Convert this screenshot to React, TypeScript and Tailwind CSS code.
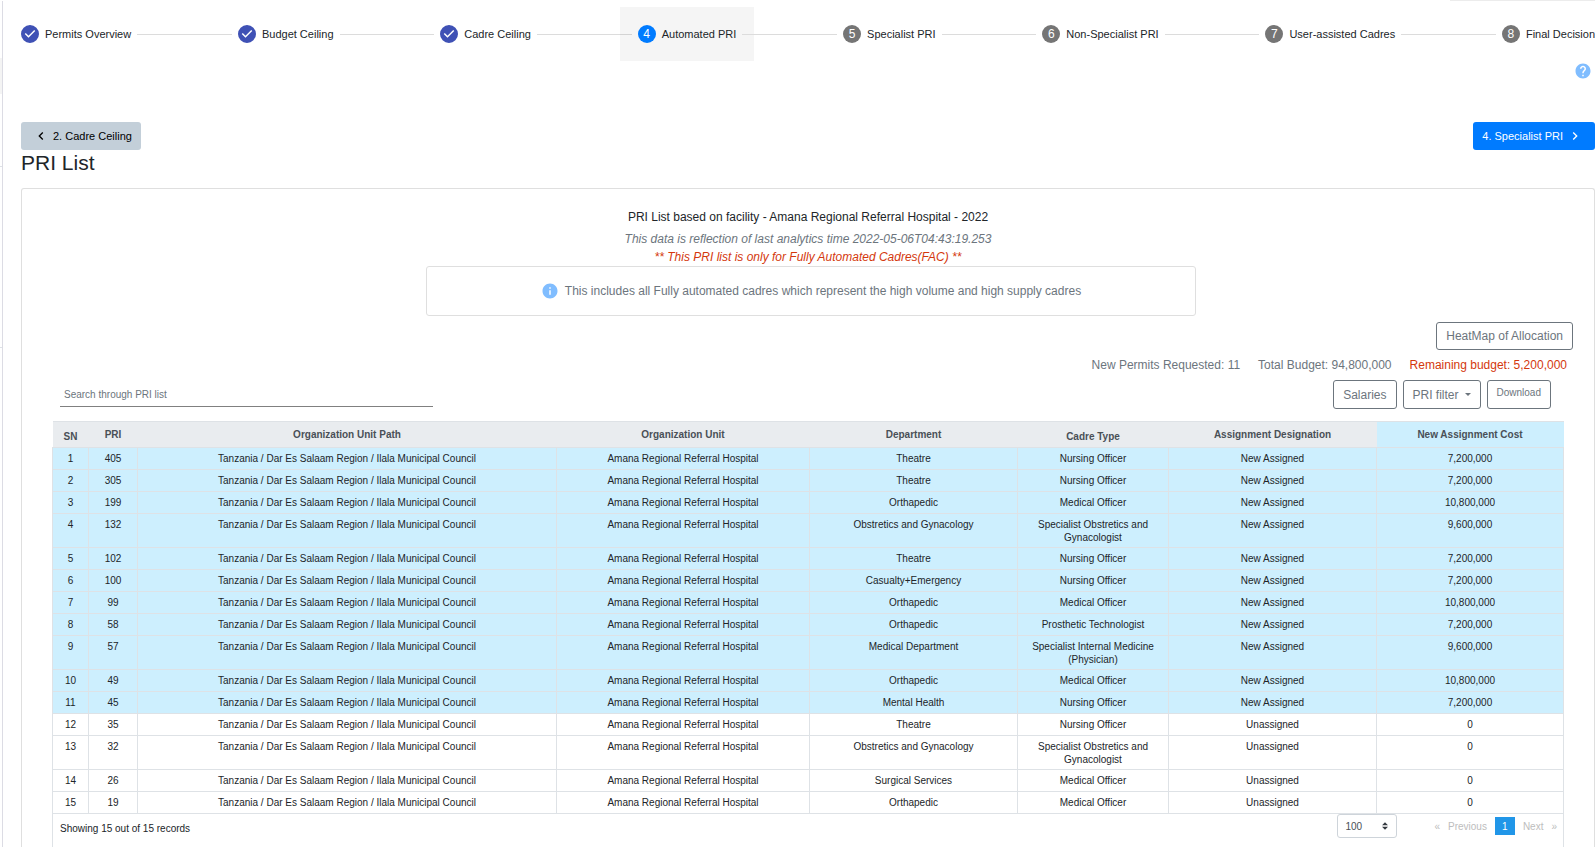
import { Fragment, type ReactNode } from "react";
import { MdChevronLeft, MdChevronRight, MdHelp, MdInfo } from "react-icons/md";

type StepState = "done" | "active" | "todo";

const steps: { label: string; state: StepState }[] = [
  { label: "Permits Overview", state: "done" },
  { label: "Budget Ceiling", state: "done" },
  { label: "Cadre Ceiling", state: "done" },
  { label: "Automated PRI", state: "active" },
  { label: "Specialist PRI", state: "todo" },
  { label: "Non-Specialist PRI", state: "todo" },
  { label: "User-assisted Cadres", state: "todo" },
  { label: "Final Decision", state: "todo" },
];

const columns = [
  { title: "SN", width: "w-[36px]", low: true },
  { title: "PRI", width: "w-[49px]", low: false },
  { title: "Organization Unit Path", width: "w-[419px]", low: false },
  { title: "Organization Unit", width: "w-[253px]", low: false },
  { title: "Department", width: "w-[208px]", low: false },
  { title: "Cadre Type", width: "w-[151px]", low: true },
  { title: "Assignment Designation", width: "w-[208px]", low: false },
  { title: "New Assignment Cost", width: "w-[187px]", low: false },
];

const rows: { pri: number; department: string; cadre: string; cost: string }[] = [
  { pri: 405, department: "Theatre", cadre: "Nursing Officer", cost: "7,200,000" },
  { pri: 305, department: "Theatre", cadre: "Nursing Officer", cost: "7,200,000" },
  { pri: 199, department: "Orthapedic", cadre: "Medical Officer", cost: "10,800,000" },
  { pri: 132, department: "Obstretics and Gynacology", cadre: "Specialist Obstretics and Gynacologist", cost: "9,600,000" },
  { pri: 102, department: "Theatre", cadre: "Nursing Officer", cost: "7,200,000" },
  { pri: 100, department: "Casualty+Emergency", cadre: "Nursing Officer", cost: "7,200,000" },
  { pri: 99, department: "Orthapedic", cadre: "Medical Officer", cost: "10,800,000" },
  { pri: 58, department: "Orthapedic", cadre: "Prosthetic Technologist", cost: "7,200,000" },
  { pri: 57, department: "Medical Department", cadre: "Specialist Internal Medicine (Physician)", cost: "9,600,000" },
  { pri: 49, department: "Orthapedic", cadre: "Medical Officer", cost: "10,800,000" },
  { pri: 45, department: "Mental Health", cadre: "Nursing Officer", cost: "7,200,000" },
  { pri: 35, department: "Theatre", cadre: "Nursing Officer", cost: "0" },
  { pri: 32, department: "Obstretics and Gynacology", cadre: "Specialist Obstretics and Gynacologist", cost: "0" },
  { pri: 26, department: "Surgical Services", cadre: "Medical Officer", cost: "0" },
  { pri: 19, department: "Orthapedic", cadre: "Medical Officer", cost: "0" },
];

function StepMark({ state, index }: { state: StepState; index: number }) {
  if (state === "done") {
    return (
      <svg viewBox="0 0 24 24" className="size-[18px] shrink-0 fill-[#3f51b5]" aria-hidden="true">
        <path d="M12 0a12 12 0 1 0 0 24 12 12 0 0 0 0-24zm-2 17l-5-5 1.4-1.4 3.6 3.6 7.6-7.6L19 8l-9 9z" />
      </svg>
    );
  }
  const tone = state === "active" ? "bg-[#007bff]" : "bg-[#757575]";
  return (
    <span className={`flex size-[18px] shrink-0 items-center justify-center rounded-full text-[12px] leading-none text-white ${tone}`}>
      {index}
    </span>
  );
}

function Stepper() {
  return (
    <nav aria-label="Progress" className="flex items-center pt-[7px]">
      {steps.map((step, i) => (
        <Fragment key={step.label}>
          {i > 0 && <span className="mx-[6px] h-px flex-1 bg-[#dcdcdc]" />}
          <button
            type="button"
            className={`-mx-[18px] flex h-[54px] items-center gap-[6px] px-[18px] text-[11px] whitespace-nowrap ${
              step.state === "active" ? "bg-black/4" : ""
            }`}
          >
            <StepMark state={step.state} index={i + 1} />
            {step.label}
          </button>
        </Fragment>
      ))}
    </nav>
  );
}

function OutlineButton({ children, className = "" }: { children: ReactNode; className?: string }) {
  return (
    <button
      type="button"
      className={`rounded-[3px] border border-[#6c757d] px-[9px] text-[12px] text-[#6c757d] ${className}`}
    >
      {children}
    </button>
  );
}

function PriTable() {
  return (
    <table className="w-full table-fixed border-collapse text-center text-[10px] leading-[13px]">
      <thead>
        <tr className="h-[26px] bg-[#e9ecef] text-[#495057]">
          {columns.map((c, i) => (
            <th
              key={c.title}
              className={`border-t border-[#dee2e6] align-top font-bold ${c.width} ${c.low ? "pt-[8px]" : "pt-[6px]"} ${
                i === columns.length - 1 ? "bg-[#cdeffe]" : ""
              }`}
            >
              {c.title}
            </th>
          ))}
        </tr>
      </thead>
      <tbody>
        {rows.map((r, i) => {
          const assigned = r.cost !== "0";
          const cells = [
            i + 1,
            r.pri,
            "Tanzania / Dar Es Salaam Region / Ilala Municipal Council",
            "Amana Regional Referral Hospital",
            r.department,
            r.cadre,
            assigned ? "New Assigned" : "Unassigned",
            r.cost,
          ];
          return (
            <tr key={r.pri} className={`h-[22px] align-top ${assigned ? "bg-[#cdeffe]" : "bg-white"}`}>
              {cells.map((cell, j) => (
                <td key={columns[j].title} className="border border-[#dee2e6] px-[12px] pt-[4px] pb-[3px] first:px-0">
                  {cell}
                </td>
              ))}
            </tr>
          );
        })}
      </tbody>
    </table>
  );
}

function TableFooter() {
  return (
    <div className="flex flex-1 items-start justify-between border-x border-[#dee2e6] pr-[6px] pl-[7px] text-[10px] leading-[13px]">
      <p className="pt-[8px]">Showing 15 out of 15 records</p>
      <div className="flex items-center">
        <div className="relative">
          <select
            aria-label="Records per page"
            className="h-[24px] w-[60px] appearance-none rounded-[3px] border border-[#ced4da] bg-white pl-[7px] text-[#495057]"
          >
            <option>100</option>
          </select>
          <svg viewBox="0 0 4 5" className="pointer-events-none absolute top-[8px] right-[9px] h-[8px] w-[6px] fill-[#343a40]" aria-hidden="true">
            <path d="M2 0L0 2h4zm0 5L0 3h4z" />
          </svg>
        </div>
        <div className="ml-[37px] flex items-center gap-[8px] text-[#bdbdbd]">
          <button type="button" className="flex items-center gap-[8px]">
            <span>«</span>Previous
          </button>
          <button type="button" aria-current="page" className="h-[18px] w-[20px] bg-[#2196e8] text-white">
            1
          </button>
          <button type="button" className="flex items-center gap-[8px]">
            Next<span>»</span>
          </button>
        </div>
      </div>
    </div>
  );
}

export default function App() {
  return (
    <div className="flex min-h-screen overflow-hidden bg-white font-['Liberation_Sans',Arial,sans-serif] text-[#212529]">
      <aside className="mt-px w-[3px] shrink-0 border-r border-[#dcdce4] pt-[57px]">
        <div className="h-[36px] bg-[#f4f4f4]" />
        <div className="h-[73px] border-b border-[#dee2e6]" />
        <div className="h-[181px] border-b border-[#dee2e6]" />
      </aside>
      <main className="relative flex min-w-0 flex-1 flex-col pl-[18px]">
        <div className="absolute top-0 right-0 h-px w-[145px] bg-[#ececec]" />
        <Stepper />
        <div className="flex justify-end pt-px pr-[3px]">
          <button type="button" aria-label="Help" className="text-[#80bdff]">
            <MdHelp className="size-[18px]" />
          </button>
        </div>
        <div className="mt-[42px] flex justify-between text-[11px]">
          <button type="button" className="flex h-[28px] items-center gap-[4px] rounded-[3px] bg-[#c3cfd9] pr-[9px] pl-[12px] text-black">
            <MdChevronLeft className="size-[16px]" />
            2. Cadre Ceiling
          </button>
          <button type="button" className="flex h-[28px] items-center gap-[4px] rounded-[3px] bg-[#007bff] pr-[12px] pl-[9px] text-white">
            4. Specialist PRI
            <MdChevronRight className="size-[16px]" />
          </button>
        </div>
        <h1 className="text-[21px] leading-[26px]">PRI List</h1>
        <section className="mt-[12px] flex flex-1 flex-col rounded-t-[3px] border border-b-0 border-[#dfdfdf] pt-[19px] text-[12px] leading-[18px] text-[#6c757d]">
          <div className="text-center">
            <h2 className="pb-[4px] text-[#212529]">PRI List based on facility - Amana Regional Referral Hospital - 2022</h2>
            <p className="italic">This data is reflection of last analytics time 2022-05-06T04:43:19.253</p>
            <p className="text-[#d4380d] italic">** This PRI list is only for Fully Automated Cadres(FAC) **</p>
          </div>
          <div className="flex justify-center pl-[6px]">
            <div className="flex h-[50px] w-[770px] max-w-full items-center justify-center gap-[6px] rounded-[3px] border border-[#dfdfdf]">
              <MdInfo className="size-[18px] text-[#80bdff]" />
              This includes all Fully automated cadres which represent the high volume and high supply cadres
            </div>
          </div>
          <div className="flex justify-end pt-[6px] pr-[21px]">
            <OutlineButton className="h-[28px]">HeatMap of Allocation</OutlineButton>
          </div>
          <div className="flex justify-end gap-[18px] pt-[6px] pr-[27px]">
            <span>New Permits Requested: 11</span>
            <span>Total Budget: 94,800,000</span>
            <span className="text-[#d4380d]">Remaining budget: 5,200,000</span>
          </div>
          <div className="flex items-end justify-between pt-[6px] pr-[43px] pl-[38px]">
            <input
              type="text"
              aria-label="Search through PRI list"
              placeholder="Search through PRI list"
              className="mb-[2px] h-[24px] w-1/4 border-b border-[#808080] px-[4px] text-[10px] outline-none placeholder:text-[#6c757d]"
            />
            <div className="flex gap-[6px]">
              <OutlineButton className="h-[29px]">Salaries</OutlineButton>
              <OutlineButton className="flex h-[29px] items-center gap-[6px]">
                PRI filter
                <span className="border-x-[3px] border-t-[3px] border-x-transparent border-t-[#6c757d]" />
              </OutlineButton>
              <OutlineButton className="h-[29px]">
                <span className="block pb-[4px] text-[10px] leading-[14px]">Download</span>
              </OutlineButton>
            </div>
          </div>
          <div className="mx-[30px] mt-[12px] flex flex-1 flex-col text-[#212529]">
            <PriTable />
            <TableFooter />
          </div>
        </section>
      </main>
    </div>
  );
}
